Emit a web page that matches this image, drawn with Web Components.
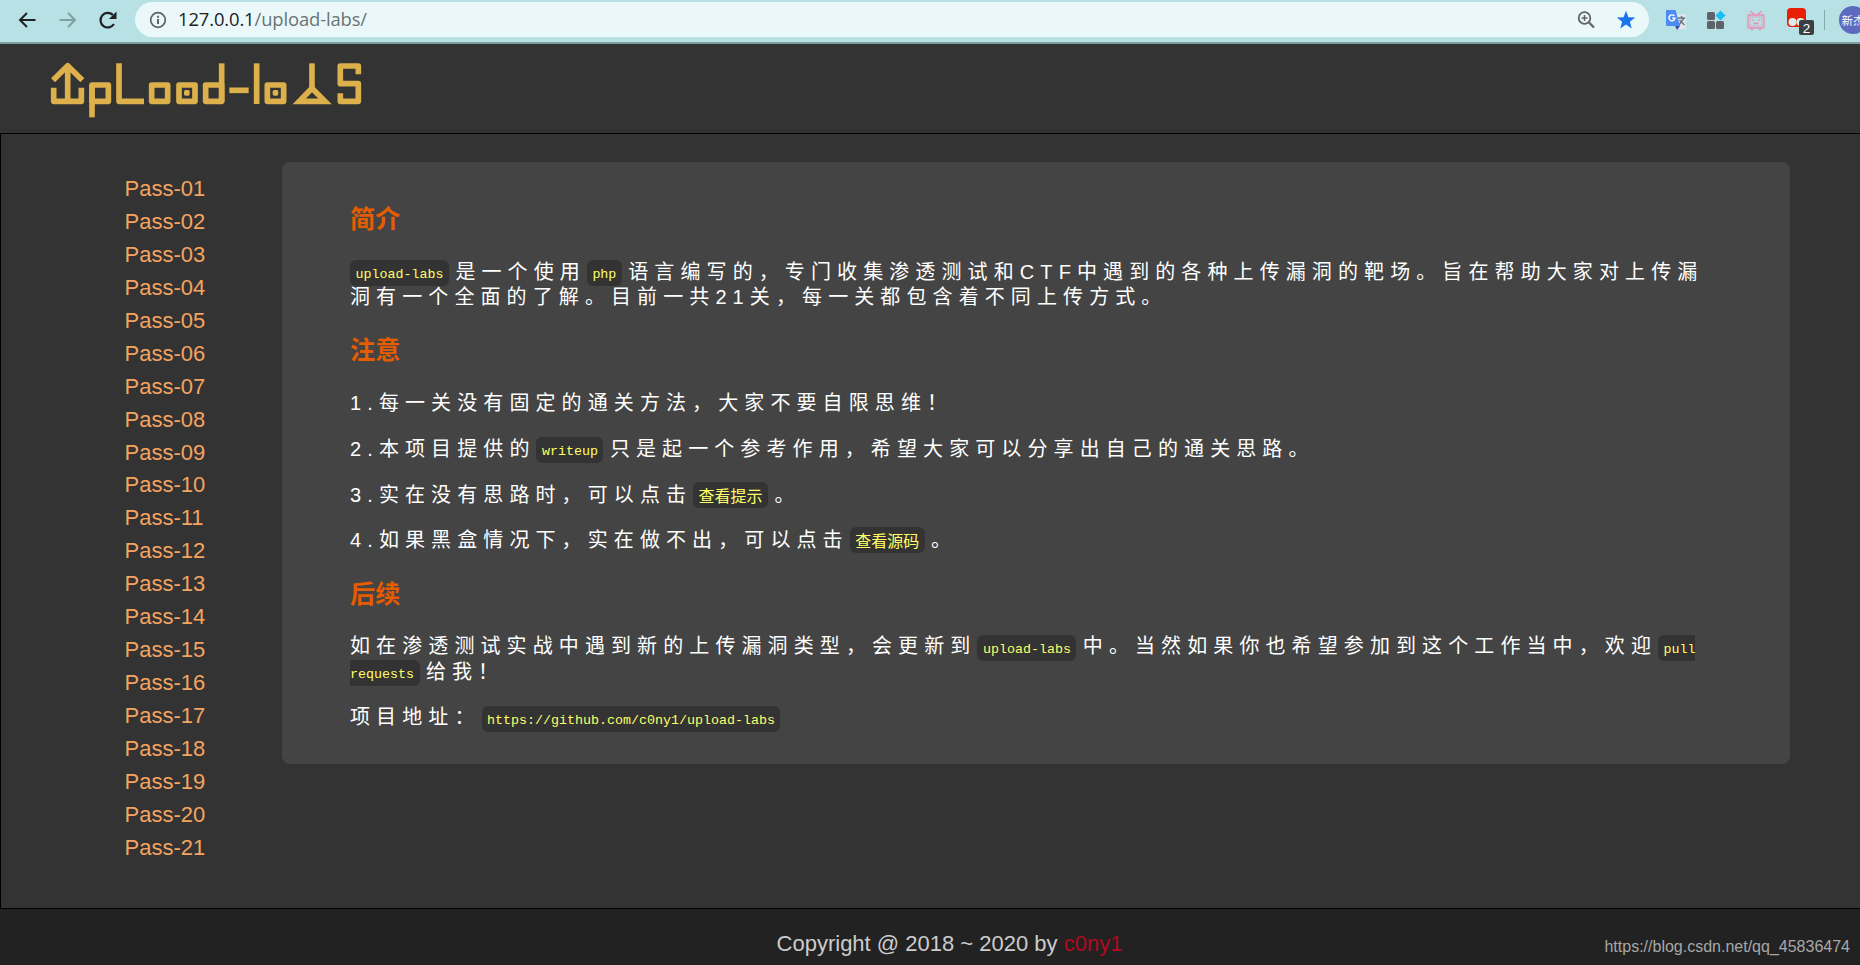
<!DOCTYPE html>
<html lang="zh-CN">
<head>
<meta charset="utf-8">
<title>upload-labs</title>
<style>
    body {
        margin: 0;
        height: 965px;
        overflow: hidden;
        display: flex;
        flex-direction: column;
        background: #333;
        color: #fff;
        font-family: "Liberation Sans", Arial, "Noto Sans CJK SC", sans-serif;
        font-size: 20px;
    }
</style>
</head>
<body>
<browser-bar></browser-bar>
<site-header></site-header>
<site-main>
    <pass-menu slot="menu" count="21"></pass-menu>
    <content-panel>
        <section-title>简介</section-title>
        <text-block><code-tag first>upload-labs</code-tag>是一个使用<code-tag>php</code-tag>语言编写的，专门收集渗透测试和CTF中遇到的各种上传漏洞的靶场。旨在帮助大家对上传漏洞有一个全面的了解。目前一共21关，每一关都包含着不同上传方式。</text-block>
        <section-title>注意</section-title>
        <text-block>1.每一关没有固定的通关方法，大家不要自限思维！</text-block>
        <text-block>2.本项目提供的<code-tag>writeup</code-tag>只是起一个参考作用，希望大家可以分享出自己的通关思路。</text-block>
        <text-block>3.实在没有思路时，可以点击<code-tag cjk>查看提示</code-tag>。</text-block>
        <text-block>4.如果黑盒情况下，实在做不出，可以点击<code-tag cjk>查看源码</code-tag>。</text-block>
        <section-title>后续</section-title>
        <text-block>如在渗透测试实战中遇到新的上传漏洞类型，会更新到<code-tag>upload-labs</code-tag>中。当然如果你也希望参加到这个工作当中，欢迎<code-tag>pull requests</code-tag>给我！</text-block>
        <text-block>项目地址：<code-tag>https://github.com/c0ny1/upload-labs</code-tag></text-block>
    </content-panel>
</site-main>
<site-footer>Copyright @ 2018 ~ 2020 by <span slot="author">c0ny1</span></site-footer>

<script>
class BrowserBar extends HTMLElement {
    constructor() {
        super();
        this.attachShadow({mode: 'open'});
        this.shadowRoot.innerHTML = `
            <style>
                :host {
                    display: flex;
                    flex: none;
                    box-sizing: border-box;
                    width: 1875px;
                    height: 44px;
                    padding: 2px 0 5px 15px;
                    background: #b7e1e4;
                    border-bottom: 2px solid #7e9da0;
                    color: #202124;
                }
                svg {
                    display: block;
                    flex: none;
                }
                #nav {
                    display: flex;
                    gap: 16px;
                    width: 120px;
                    align-items: center;
                }
                #address {
                    display: flex;
                    align-items: center;
                    box-sizing: border-box;
                    width: 1514px;
                    height: 35px;
                    padding: 0 13px 0 14px;
                    border-radius: 18px;
                    background: #ebf8f9;
                }
                #url {
                    flex: 1;
                    margin-left: 11px;
                    font: 18.4px/33px "Open Sans", "Noto Sans", sans-serif;
                    height: 35px;
                    letter-spacing: -0.12px;
                    white-space: pre;
                }
                #url span {
                    color: #687376;
                }
                #tools {
                    display: flex;
                    align-items: center;
                    margin-left: 16px;
                }
                #avatar {
                    display: flex;
                    align-items: center;
                    justify-content: center;
                    flex: none;
                    width: 28px;
                    height: 28px;
                    margin-left: 14px;
                    border-radius: 50%;
                    background: #5c6bc0;
                    color: #fff;
                    font: 11.5px "Noto Sans CJK SC", sans-serif;
                }
                #line {
                    width: 1px;
                    height: 20px;
                    background: #87a9ad;
                    margin-left: 9px;
                }
            </style>
            <div id="nav">
                <svg width="24" height="24" viewBox="0 0 24 24" fill="none" stroke="#202124" stroke-width="2"><path d="M20.500 12H6M12 5l-7 7 7 7"/></svg>
                <svg width="24" height="24" viewBox="0 0 24 24" fill="none" stroke="#7f9fa3" stroke-width="2"><path d="M4.500 12H19M13 5l7 7-7 7"/></svg>
                <svg width="24" height="24" viewBox="0 0 24 24"><path d="M19 16A7.300 7.300 0 1 1 17.900 6.900" fill="none" stroke="#202124" stroke-width="2.200"/><path d="M21.500 3.500v7.500h-7.500z" fill="#202124"/></svg>
            </div>
            <div id="address">
                <svg width="18" height="18" viewBox="0 0 18 18"><circle cx="9" cy="9" r="7.300" fill="none" stroke="#5f6368" stroke-width="1.700"/><path d="M9 8v5M9 4.700v2" stroke="#5f6368" stroke-width="2"/></svg>
                <div id="url">127.0.0.1<span>/upload-labs/</span></div>
                <svg width="20" height="20" viewBox="0 0 20 20" fill="none" stroke="#5f6368"><circle cx="8.500" cy="8" r="5.800" stroke-width="1.800"/><path d="M13 12.500l5 5" stroke-width="2.300"/><path d="M5.500 8h6M8.500 5v6" stroke-width="1.500"/></svg>
                <svg style="margin: 0 0 0 20px" width="20" height="20" viewBox="0 0 20 20"><path d="M10 .8l2.400 6.400 6.800.3-5.300 4.300 1.800 6.600-5.700-3.800-5.700 3.800 1.800-6.600L.8 7.500l6.800-.3z" fill="#1a73e8"/></svg>
            </div>
            <div id="tools">
                <svg width="22" height="22" viewBox="0 0 22 22">
                    <path d="M9 5h12v15H11z" fill="#dfe5e8"/>
                    <path d="M13 9h7M16.500 7v2M14 16l5-7M14.500 11l5 5" fill="none" stroke="#65747b" stroke-width="1.300"/>
                    <path d="M1 1h9.500l4.500 16H2a1 1 0 0 1-1-1z" fill="#4c8bf0"/>
                    <path d="M10 17h5l-3 4z" fill="#3450a6"/>
                    <path d="M9.400 7A3 3 0 1 0 10 9.200H7.200" fill="none" stroke="#fff" stroke-width="1.400"/>
                </svg>
                <svg style="margin-left: 18px" width="22" height="22" viewBox="0 0 22 22">
                    <g fill="#5f6368"><rect x="2" y="3" width="8" height="8" rx="1.500"/><rect x="2" y="12" width="8" height="8" rx="1.500"/><rect x="11" y="12" width="8" height="8" rx="1.500"/></g>
                    <path d="M15.500 1.500l5 5-5 5-5-5z" fill="#17bdf5"/>
                </svg>
                <svg style="margin-left: 18px" width="22" height="22" viewBox="0 0 22 22" fill="none" stroke="#ea8db2" stroke-width="1.300">
                    <rect x="3" y="6" width="16" height="13" rx="1"/><rect x="5" y="8" width="12" height="9" stroke-width=".7"/>
                    <path d="M5 2l5 4M17 2l-5 4M7 10.500l2 1M15 10.500l-2 1M8.500 14l1.200 1 1.300-1 1.300 1 1.200-1M6 20.500h2M14 20.500h2"/>
                </svg>
                <svg style="margin-left: 18px" width="30" height="30" viewBox="0 0 30 30">
                    <rect x="2" y="3" width="19" height="19" rx="4" fill="#ea1d05"/>
                    <circle cx="7.500" cy="17" r="4" fill="#d9eef0"/><circle cx="15.500" cy="17" r="4" fill="#d9eef0"/>
                    <rect x="14" y="15" width="15" height="15" rx="2" fill="#3c4043"/>
                    <text x="21.500" y="27.500" text-anchor="middle" font-size="13.500" fill="#fff">2</text>
                </svg>
                <div id="line"></div>
                <div id="avatar">新杰</div>
            </div>
        `;
    }
}

class SiteHeader extends HTMLElement {
    constructor() {
        super();
        this.attachShadow({mode: 'open'});
        this.shadowRoot.innerHTML = `
            <style>
                :host {
                    display: block;
                    flex: none;
                    box-sizing: border-box;
                    height: 89px;
                    padding: 17.667px 0 0 50px;
                    background: #333;
                }
                svg {
                    display: block;
                }
            </style>
            <svg width="313.333" height="56.667" viewBox="150 185 940 170" fill="none" stroke="#dcb04b" stroke-width="17" stroke-linejoin="round">
                <polyline points="159,240 203,196 247,240"/>
                <line x1="203" y1="196" x2="203" y2="300"/>
                <polyline points="161,262 161,303 244,303 244,262"/>
                <rect x="276" y="254" width="49" height="49"/>
                <line x1="276" y1="254" x2="276" y2="351"/>
                <polyline points="357,189 357,303 432,303"/>
                <rect x="455" y="254" width="48" height="49"/>
                <rect x="537" y="254" width="48" height="49"/>
                <rect x="557" y="274" width="7" height="7" stroke-width="10"/>
                <rect x="617" y="254" width="48" height="49"/>
                <line x1="665" y1="189" x2="665" y2="303"/>
                <line x1="688" y1="270" x2="746" y2="270"/>
                <line x1="770" y1="189" x2="770" y2="311"/>
                <rect x="802" y="254" width="49" height="49"/>
                <rect x="823" y="274" width="7" height="7" stroke-width="10"/>
                <line x1="936" y1="189" x2="936" y2="264"/>
                <path d="M936 264L898 303H975Z" stroke-linejoin="miter"/>
                <polyline points="1075,222 1075,197 1021,197 1021,250 1075,250 1075,303 1021,303 1021,279"/>
            </svg>
        `;
    }
}

class SiteMain extends HTMLElement {
    constructor() {
        super();
        this.attachShadow({mode: 'open'});
        this.shadowRoot.innerHTML = `
            <style>
                :host {
                    display: grid;
                    flex: none;
                    grid-template-columns: 281px 1508px;
                    align-items: start;
                    box-sizing: border-box;
                    height: 776px;
                    padding-top: 28px;
                    border: 1px solid #000;
                    border-right: 0;
                    background: #333;
                }
            </style>
            <slot name="menu"></slot>
            <slot></slot>
        `;
    }
}

class PassMenu extends HTMLElement {
    constructor() {
        super();
        this.attachShadow({mode: 'open'});
        this.shadowRoot.innerHTML = `
            <style>
                :host {
                    display: block;
                    padding: 11px 0 0 123.5px;
                    font-size: 22px;
                    line-height: 32.93px;
                }
                ul {
                    margin: 0;
                    padding: 0;
                    list-style: none;
                }
                a {
                    color: #f4a460;
                }
            </style>
            <ul></ul>
        `;
    }

    connectedCallback() {
        const list = this.shadowRoot.querySelector('ul');
        list.innerHTML = '';
        for (let i = 1; i <= Number(this.getAttribute('count')); i++) {
            const item = document.createElement('li');
            item.innerHTML = `<a>Pass-${String(i).padStart(2, '0')}</a>`;
            list.appendChild(item);
        }
    }
}

class ContentPanel extends HTMLElement {
    constructor() {
        super();
        this.attachShadow({mode: 'open'});
        this.shadowRoot.innerHTML = `
            <style>
                :host {
                    display: block;
                    box-sizing: border-box;
                    height: 602px;
                    padding: 17px 80px 0 68px;
                    border-radius: 8px;
                    background: #444;
                }
            </style>
            <slot></slot>
        `;
    }
}

class SectionTitle extends HTMLElement {
    constructor() {
        super();
        this.attachShadow({mode: 'open'});
        this.shadowRoot.innerHTML = `
            <style>
                :host {
                    display: block;
                    margin: 24.2px 0;
                    color: #e65c00;
                    font-size: 25.2px;
                    font-weight: bold;
                    line-height: 32.5px;
                }
            </style>
            <slot></slot>
        `;
    }
}

class TextBlock extends HTMLElement {
    constructor() {
        super();
        this.attachShadow({mode: 'open'});
        this.shadowRoot.innerHTML = `
            <style>
                :host {
                    display: block;
                    margin: 20.5px 0;
                    line-height: 25.2px;
                    letter-spacing: 6.1px;
                    text-spacing-trim: space-all;
                }
            </style>
            <slot></slot>
        `;
    }
}

class CodeTag extends HTMLElement {
    constructor() {
        super();
        this.attachShadow({mode: 'open'});
        // inline box: whitespace around the slot would be drawn, so keep it tight
        this.shadowRoot.innerHTML = `<style>
                :host {
                    display: inline;
                    margin: 0 6.4px 0 1px;
                    padding: 6.5px 5.5px 4.5px;
                    border-radius: 6px;
                    background: #333;
                    color: #ff6;
                    font-family: "Liberation Mono", monospace;
                    font-size: 13.333px;
                    line-height: 1;
                    letter-spacing: 0;
                    vertical-align: 1px;
                }
                :host([first]) {
                    margin-left: 0;
                }
                :host([cjk]) {
                    padding: 1px 5.5px;
                    font-family: "Noto Sans CJK SC", sans-serif;
                    font-size: 16px;
                    vertical-align: baseline;
                }
            </style><slot></slot>`;
    }
}

class SiteFooter extends HTMLElement {
    constructor() {
        super();
        this.attachShadow({mode: 'open'});
        this.shadowRoot.innerHTML = `
            <style>
                :host {
                    display: grid;
                    grid-template-columns: 1fr auto 1fr;
                    flex: 1;
                    padding: 0 10px;
                    background: #222;
                    color: #ccc;
                    font-size: 22px;
                    line-height: 69px;
                }
                p {
                    grid-column: 2;
                    margin: 0 0 0 39px;
                    white-space: pre;
                }
                ::slotted(span) {
                    color: #b5081f;
                }
                small {
                    justify-self: end;
                    color: #a8a8a8;
                    font-size: 16px;
                    line-height: 76px;
                }
            </style>
            <p><slot></slot><slot name="author"></slot></p>
            <small>https://blog.csdn.net/qq_45836474</small>
        `;
    }
}

customElements.define('browser-bar', BrowserBar);
customElements.define('site-header', SiteHeader);
customElements.define('site-main', SiteMain);
customElements.define('pass-menu', PassMenu);
customElements.define('content-panel', ContentPanel);
customElements.define('section-title', SectionTitle);
customElements.define('text-block', TextBlock);
customElements.define('code-tag', CodeTag);
customElements.define('site-footer', SiteFooter);
</script>
</body>
</html>
